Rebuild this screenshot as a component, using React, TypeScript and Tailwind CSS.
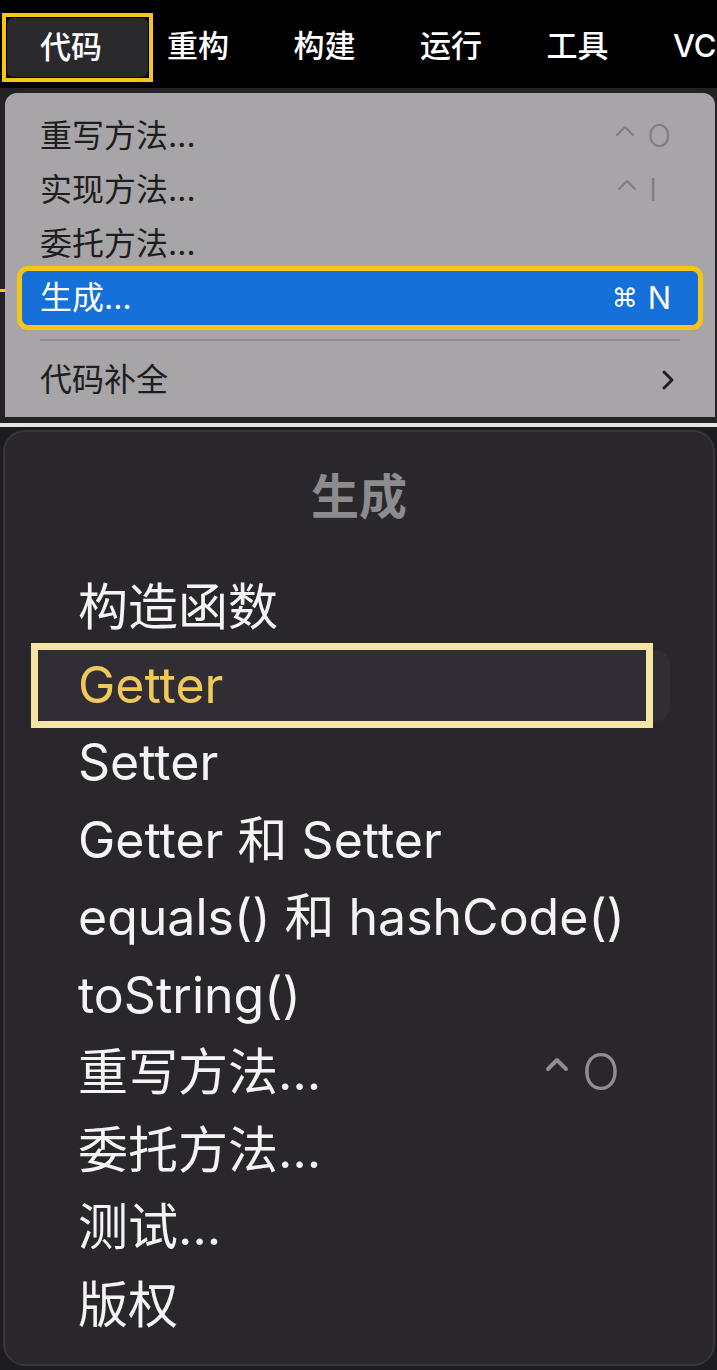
function Caret({ w, h, sw, color }: { w: number; h: number; sw: number; color: string }) {
  return (
    <svg width={w} height={h} viewBox={`0 0 ${w} ${h}`} fill="none">
      <path
        d={`M${sw} ${h - sw} L${w / 2} ${sw} L${w - sw} ${h - sw}`}
        stroke={color}
        strokeWidth={sw}
        strokeLinecap="round"
        strokeLinejoin="round"
      />
    </svg>
  );
}

export default function App() {
  const top = ['重构', '构建', '运行', '工具', 'VCS'];
  const items: { t: string; s?: string; hl?: boolean }[] = [
    { t: '构造函数' },
    { t: 'Getter', hl: true },
    { t: 'Setter' },
    { t: 'Getter 和 Setter' },
    { t: 'equals() 和 hashCode()' },
    { t: 'toString()' },
    { t: '重写方法…', s: 'O' },
    { t: '委托方法…' },
    { t: '测试…' },
    { t: '版权' },
  ];
  return (
    <div className="w-[717px] h-[1370px] overflow-hidden bg-[#1d1c20] font-['Inter','Noto_Sans_CJK_SC',sans-serif]">
      {/* menubar */}
      <div className="h-[88px] bg-black flex items-start overflow-hidden whitespace-nowrap">
        <div className="ml-[2px] mt-[13px] w-[151px] h-[69px] shrink-0 border-[4px] border-[#f5c518] bg-black p-[1px]">
          <div className="h-full w-full rounded-[6px] bg-[#2a2a2c] flex items-center pl-[33px] text-[31px] font-medium text-white">
            代码
          </div>
        </div>
        <div className="ml-[14px] flex">
          {top.map((t) => (
            <div key={t} className="w-[126.5px] shrink-0 h-[88px] flex items-center pt-[4px] text-[31px] font-medium text-white">
              {t}
            </div>
          ))}
        </div>
      </div>

      {/* gray dropdown */}
      <div className="relative bg-[#232225] pt-[5px] pl-[5px] pr-[2px] h-[329px]">
        <div className="absolute left-0 top-[201px] w-[6px] h-[3px] bg-[#f5c518]" />
        <div className="h-[324px] rounded-t-[12px] bg-[#a7a5a8] pt-[16px] text-[32px] text-[#1e1e1e]">
          <div className="mx-[17px] pl-[18px] pr-[27px] h-[54px] flex items-center justify-between">
            <span>重写方法…</span>
            <span className="text-[#807e81] flex items-center gap-[12px] text-[31px]">
              <span className="-mt-[10px]"><Caret w={20} h={12} sw={2} color="#807e81" /></span>
              <span className="font-light">O</span>
            </span>
          </div>
          <div className="mx-[17px] pl-[18px] pr-[27px] h-[54px] flex items-center justify-between">
            <span>实现方法…</span>
            <span className="text-[#807e81] flex items-center gap-[12px] text-[31px]">
              <span className="-mt-[10px]"><Caret w={20} h={12} sw={2} color="#807e81" /></span>
              <span className="font-light w-[22px]">I</span>
            </span>
          </div>
          <div className="mx-[17px] pl-[18px] pr-[27px] h-[54px] flex items-center justify-between">
            <span>委托方法…</span>
          </div>
          <div className="mx-[17px] pl-[18px] pr-[27px] h-[54px] flex items-center justify-between rounded-[6px] bg-[#1570d9] text-white ring-[5px] ring-[#f5c518]">
            <span>生成…</span>
            <span className="flex items-center gap-[10px] text-[31px]">
              <span className="font-['DejaVu_Sans'] text-[26px]">⌘</span>
              <span>N</span>
            </span>
          </div>
          <div className="mx-[35px] mt-[14px] h-[2px] bg-[#8f8d90]" />
          <div className="mt-[12px] mx-[17px] pl-[18px] pr-[23px] h-[54px] flex items-center justify-between">
            <span>代码补全</span>
            <svg width="14" height="22" viewBox="0 0 14 22" fill="none">
              <path d="M3 3 L11 11 L3 19" stroke="#1e1e1e" strokeWidth="3" strokeLinecap="round" strokeLinejoin="round" />
            </svg>
          </div>
        </div>
      </div>
      <div className="h-[6px] bg-[#232225]" />
      <div className="h-[4px] bg-[#e4e4e4]" />
      <div className="h-[3px] bg-[#1d1c20]" />

      {/* generate popup */}
      <div className="ml-[3px] mr-[2px] h-[936px] rounded-[22px] border-[2px] border-[#38363b] bg-[#29272c] pt-[35px]">
        <div className="h-[60px] leading-[60px] text-center text-[48px] font-bold text-[#8c8b8e]">生成</div>
        <div className="mt-[42px] pl-[73px]">
          {items.map((it) => (
            <div
              key={it.t}
              className="relative w-[545px] h-[77.5px] flex items-center justify-between whitespace-nowrap text-[50px] text-[#f4f4f5]"
            >
              {it.hl && (
                <>
                  <div className="absolute left-[-47px] w-[639px] top-[3px] bottom-[3px] rounded-[14px] bg-[#302d34]" />
                  <div className="absolute left-[-47px] w-[622px] top-[-4px] bottom-[-4px] border-[7px] border-[#f6e4a4]" />
                </>
              )}
              <span className={'relative ' + (it.hl ? 'text-[#f2c85a]' : '')}>{it.t}</span>
              {it.s && (
                <span className="relative flex items-center gap-[12px] text-[#8e8d90] pr-[3px]">
                  <span className="-mt-[16px]"><Caret w={26} h={17} sw={4} color="#8e8d90" /></span>
                  <span className="font-light">{it.s}</span>
                </span>
              )}
            </div>
          ))}
        </div>
      </div>
    </div>
  );
}
